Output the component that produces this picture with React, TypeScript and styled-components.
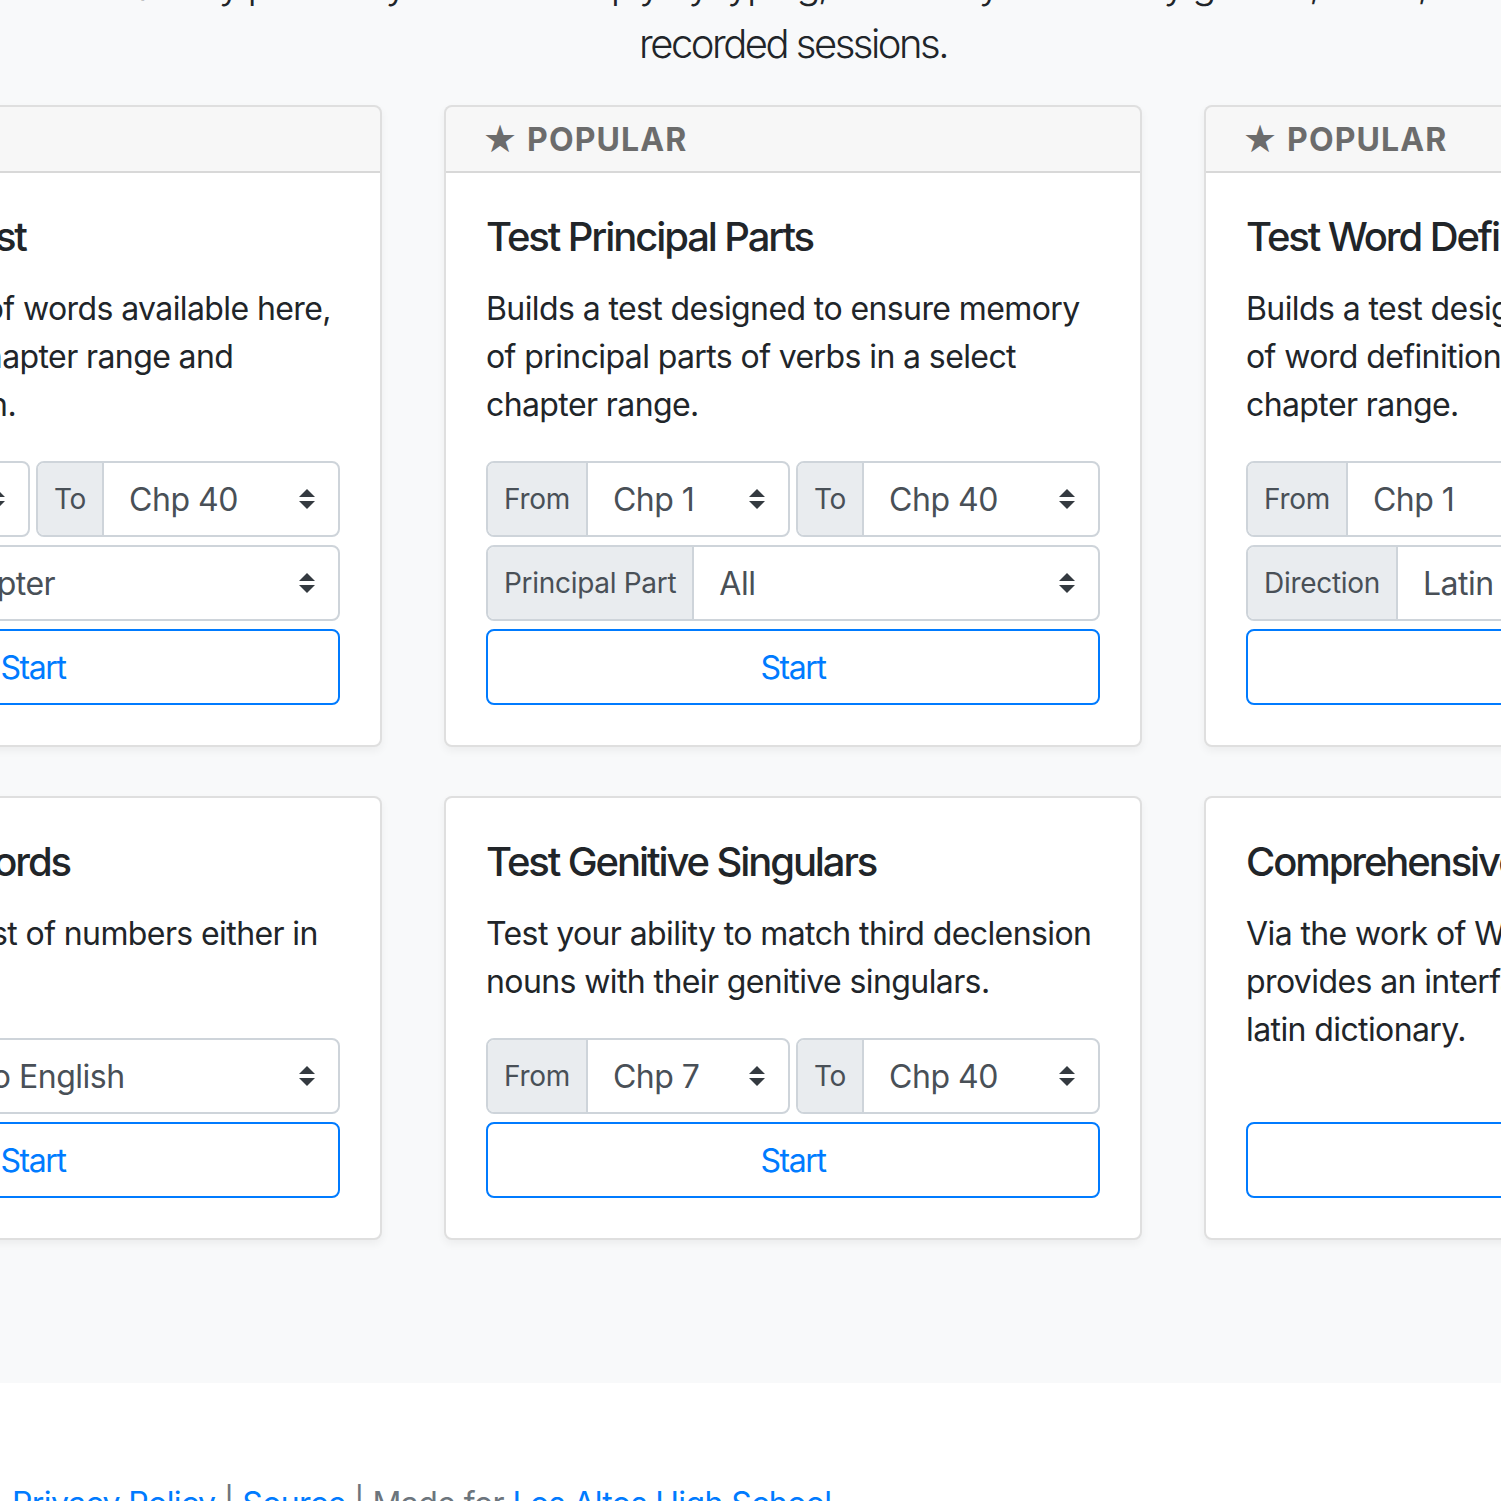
import React from "react";
import styled, { createGlobalStyle } from "styled-components";

const Global = createGlobalStyle`
  html, body { margin: 0; padding: 0; background: #ffffff; }
  body {
    font-family: Inter, "Helvetica Neue", "Liberation Sans", Arial, sans-serif;
    color: #212529;
    overflow: hidden;
  }
  * { box-sizing: border-box; }
`;

const Page = styled.div`
  width: 1501px;
  height: 1501px;
  overflow: hidden;
`;

const Main = styled.main`
  background: #f8f9fa;
  padding-bottom: 143px;
`;

const Deck = styled.div`
  width: 2218px;
  margin-left: -316px;
`;

const Lead = styled.p`
  margin: -46px 0 31px;
  font-size: 40px;
  font-weight: 300;
  line-height: 60px;
  text-align: center;
  letter-spacing: -2.5px;
`;

const Grid = styled.div`
  display: grid;
  grid-template-columns: repeat(3, 698px);
  column-gap: 62px;
  row-gap: 49px;
`;

const Card = styled.section`
  display: flex;
  flex-direction: column;
  background: #ffffff;
  border: 2px solid rgba(0, 0, 0, 0.125);
  border-radius: 8px;
  box-shadow: 0 4px 8px rgba(0, 0, 0, 0.05);
  overflow: hidden;
`;

const CardHeader = styled.header`
  height: 66px;
  display: flex;
  align-items: center;
  gap: 10px;
  padding: 0 40px;
  background: rgba(0, 0, 0, 0.03);
  border-bottom: 2px solid rgba(0, 0, 0, 0.125);
  color: #6c6c6c;
  font-size: 32px;
  font-weight: 700;
  letter-spacing: 1.1px;
  text-transform: uppercase;
`;

const Star = styled.span`
  font-family: "DejaVu Sans", sans-serif;
  font-size: 38px;
  line-height: 1;
  letter-spacing: 0;
  margin-left: -3px;
`;

const CardBody = styled.div`
  flex: 1;
  display: flex;
  flex-direction: column;
  padding: 40px;
`;

const Title = styled.h5`
  margin: 0 0 24px;
  font-size: 40px;
  font-weight: 500;
  line-height: 48px;
  letter-spacing: -2.1px;
  white-space: nowrap;
`;

const Text = styled.p`
  margin: 0 0 32px;
  font-size: 32px;
  line-height: 48px;
  letter-spacing: -0.6px;
`;

const Controls = styled.div`
  display: flex;
  flex-direction: column;
  gap: 8px;
  margin-bottom: 8px;
`;

const Row = styled.div`
  display: flex;
  gap: 6px;
`;

const Group = styled.div`
  flex: 1;
  display: flex;
  height: 76px;
  border: 2px solid #ced4da;
  border-radius: 8px;
  overflow: hidden;
  background: #ffffff;
`;

const Addon = styled.span`
  display: flex;
  align-items: center;
  padding: 0 16px;
  background: #e9ecef;
  border-right: 2px solid #ced4da;
  color: #495057;
  font-size: 28px;
  letter-spacing: -0.3px;
  white-space: nowrap;
`;

const Select = styled.div`
  flex: 1;
  display: flex;
  align-items: center;
  justify-content: space-between;
  padding: 0 23px 0 25px;
  color: #495057;
  font-size: 32px;
  letter-spacing: -0.5px;
  white-space: nowrap;
`;

const StartButton = styled.button`
  margin-top: auto;
  width: 100%;
  height: 76px;
  flex-shrink: 0;
  border: 2px solid #007bff;
  border-radius: 8px;
  background: transparent;
  color: #007bff;
  font-family: inherit;
  font-size: 32px;
  letter-spacing: -1.4px;
  cursor: pointer;
`;

const Footer = styled.footer`
  background: #ffffff;
  padding: 97px 12px 0;
  font-size: 32px;
  line-height: 48px;
  color: #6c757d;
  letter-spacing: -0.6px;
  white-space: nowrap;
`;

const FooterLink = styled.a`
  color: #007bff;
  text-decoration: none;
`;

const Arrows = () => (
  <svg width="16" height="20" viewBox="0 0 4 5" aria-hidden="true">
    <path d="M2 0L0 2h4zm0 5L0 3h4z" fill="#343a40" />
  </svg>
);

type Field = { label: string; value: string };
type CardData = {
  popular: boolean;
  title: string;
  text: string;
  rows: Field[][];
};

const cards: CardData[] = [
  {
    popular: true,
    title: "See the Word List",
    text: "See the entire list of words available here, filterable by any chapter range and grouped by section.",
    rows: [
      [
        { label: "From", value: "Chp 1" },
        { label: "To", value: "Chp 40" },
      ],
      [{ label: "Arrange", value: "By Chapter" }],
    ],
  },
  {
    popular: true,
    title: "Test Principal Parts",
    text: "Builds a test designed to ensure memory of principal parts of verbs in a select chapter range.",
    rows: [
      [
        { label: "From", value: "Chp 1" },
        { label: "To", value: "Chp 40" },
      ],
      [{ label: "Principal Part", value: "All" }],
    ],
  },
  {
    popular: true,
    title: "Test Word Definitions",
    text: "Builds a test designed to ensure memory of word definitions for words in a select chapter range.",
    rows: [
      [
        { label: "From", value: "Chp 1" },
        { label: "To", value: "Chp 40" },
      ],
      [{ label: "Direction", value: "Latin to English" }],
    ],
  },
  {
    popular: false,
    title: "Test Number Words",
    text: "Creates a timed test of numbers either in Latin or English.",
    rows: [[{ label: "Direction", value: "Latin to English" }]],
  },
  {
    popular: false,
    title: "Test Genitive Singulars",
    text: "Test your ability to match third declension nouns with their genitive singulars.",
    rows: [
      [
        { label: "From", value: "Chp 7" },
        { label: "To", value: "Chp 40" },
      ],
    ],
  },
  {
    popular: false,
    title: "Comprehensive Dictionary",
    text: "Via the work of William Whitaker, this provides an interface to an extensive, free latin dictionary.",
    rows: [],
  },
];

export default function App() {
  return (
    <Page>
      <Global />
      <Main>
        <Deck>
          <Lead>
            Quickly practice your Latin simply by typing, and easily review any graded, timed, or
            <br />
            recorded sessions.
          </Lead>
          <Grid>
            {cards.map((c) => (
              <Card key={c.title}>
                {c.popular && (
                  <CardHeader>
                    <Star>★</Star>
                    <span>Popular</span>
                  </CardHeader>
                )}
                <CardBody>
                  <Title>{c.title}</Title>
                  <Text>{c.text}</Text>
                  {c.rows.length > 0 && (
                    <Controls>
                      {c.rows.map((row, i) => (
                        <Row key={i}>
                          {row.map((f) => (
                            <Group key={f.label}>
                              <Addon>{f.label}</Addon>
                              <Select>
                                <span>{f.value}</span>
                                <Arrows />
                              </Select>
                            </Group>
                          ))}
                        </Row>
                      ))}
                    </Controls>
                  )}
                  <StartButton>Start</StartButton>
                </CardBody>
              </Card>
            ))}
          </Grid>
        </Deck>
      </Main>
      <Footer>
        <FooterLink href="#">Privacy Policy</FooterLink> | <FooterLink href="#">Source</FooterLink> | Made
        for <FooterLink href="#">Los Altos High School</FooterLink>
      </Footer>
    </Page>
  );
}
